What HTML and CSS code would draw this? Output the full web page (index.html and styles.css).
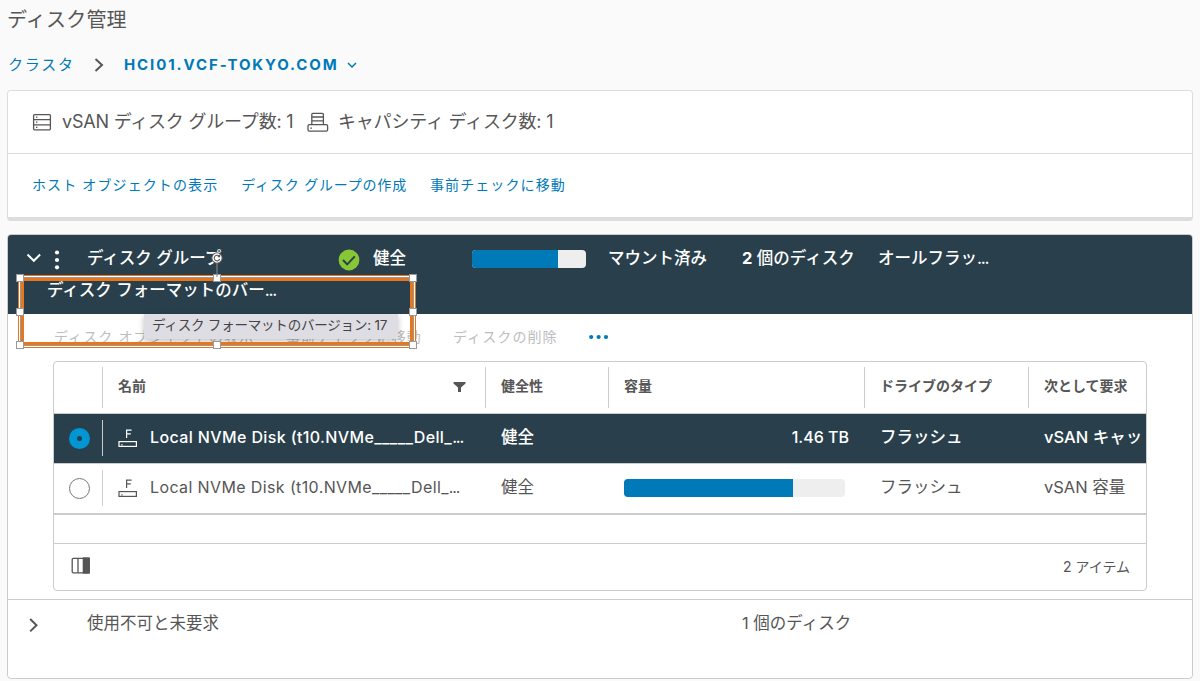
FILE: index.html
```html
<!DOCTYPE html>
<html lang="ja">
<head>
    <meta charset="UTF-8">
    <meta name="viewport" content="width=device-width, initial-scale=1.0">
    <title>ディスク管理</title>
    <link rel="stylesheet" href="styles.css">
</head>
<body>
    <h1 class="page-title">ディスク管理</h1>
    <nav class="breadcrumb">
        <a class="crumb">クラスタ</a>
        <svg class="crumb-sep" width="10" height="16" viewBox="0 0 10 16"><path d="M1.5 2l6.5 6-6.5 6"/></svg>
        <a class="crumb-current">HCI01.VCF-TOKYO.COM</a>
        <svg class="crumb-caret" width="10" height="8" viewBox="0 0 10 8"><path d="M1 2l4 4 4-4"/></svg>
    </nav>

    <section class="card summary">
        <div class="summary-stats">
            <svg class="icon" width="20" height="20" viewBox="0 0 20 20">
                <rect x="1.6" y="2.6" width="16.8" height="15.2" rx="1"/>
                <path d="M1.6 7.7h16.8M1.6 12.8h16.8M4 5.2h1.4M4 10.2h1.4M4 15.3h1.4"/>
            </svg>
            <span class="stat stat-groups">vSAN ディスク グループ数: 1</span>
            <svg class="icon" width="22" height="22" viewBox="0 0 22 22">
                <rect x="1" y="13.6" width="19.6" height="6.6" rx="1.4"/>
                <path d="M4.8 13.4V3.4q0-1 1-1h9.6q1 0 1 1v10M4.8 6h11.6M4.8 9.8h11.6M3.4 17.2h1.6"/>
            </svg>
            <span class="stat stat-capacity">キャパシティ ディスク数: 1</span>
        </div>
        <div class="summary-links">
            <a>ホスト オブジェクトの表示</a>
            <a class="tight">ディスク グループの作成</a>
            <a>事前チェックに移動</a>
        </div>
    </section>

    <section class="card groups">
        <div class="group-header">
            <div class="group-row">
                <svg class="chevron" width="16" height="10" viewBox="0 0 16 10"><path d="M1.5 1.5l6.3 6.3 6.3-6.3"/></svg>
                <svg class="kebab" width="6" height="20" viewBox="0 0 6 20"><circle cx="3" cy="2.5" r="2.1"/><circle cx="3" cy="10" r="2.1"/><circle cx="3" cy="17.3" r="2.1"/></svg>
                <span>ディスク グループ</span>
                <svg class="ok" width="22" height="22" viewBox="0 0 22 22"><circle cx="11" cy="11" r="10.4"/><path d="M5 11l4.2 4.4 7.6-8"/></svg>
                <span>健全</span>
                <div class="bar bar-light"><div class="bar-fill" style="width: 75.4%"></div></div>
                <span>マウント済み</span>
                <span><b class="num">2</b> 個のディスク</span>
                <span>オールフラッ<span class="dots">...</span></span>
            </div>
            <div class="group-format">ディスク フォーマットのバー<span class="dots">...</span></div>
        </div>

        <div class="group-body">
            <div class="actions">
                <a class="action-objects">ディスク オブジェクトの表示</a>
                <a class="action-precheck">事前チェックに移動</a>
                <a>ディスクの削除</a>
                <svg class="more" width="22" height="6" viewBox="0 0 22 6"><circle cx="3.2" cy="3" r="2.1"/><circle cx="10.6" cy="3" r="2.1"/><circle cx="18" cy="3" r="2.1"/></svg>
            </div>

            <div class="datagrid">
                <div class="grid-row grid-head">
                    <div class="cell"></div>
                    <div class="cell cell-name">名前
                        <svg class="filter" width="13" height="12" viewBox="0 0 13 12"><path d="M.5 1h12v1.6L8 6.6V11H5V6.6L.5 2.6z"/></svg>
                    </div>
                    <div class="cell">健全性</div>
                    <div class="cell">容量</div>
                    <div class="cell">ドライブのタイプ</div>
                    <div class="cell">次として要求</div>
                </div>
                <div class="grid-row selected">
                    <div class="cell cell-radio"><span class="radio checked"></span></div>
                    <div class="cell cell-name">
                        <svg class="disk" width="20" height="20" viewBox="0 0 20 20"><rect x="1" y="13.6" width="17.4" height="4.8"/><path d="M3.2 16.8h1.4M8.6 10V2.2h5M8.6 5.8h4.2"/></svg>
                        <span class="disk-name">Local NVMe Disk (t10.NVMe_____Dell_<span class="dots">...</span></span>
                    </div>
                    <div class="cell">健全</div>
                    <div class="cell cell-size">1.46 TB</div>
                    <div class="cell">フラッシュ</div>
                    <div class="cell">vSAN キャッ</div>
                </div>
                <div class="grid-row">
                    <div class="cell cell-radio"><span class="radio"></span></div>
                    <div class="cell cell-name">
                        <svg class="disk" width="20" height="20" viewBox="0 0 20 20"><rect x="1" y="13.6" width="17.4" height="4.8"/><path d="M3.2 16.8h1.4M8.6 10V2.2h5M8.6 5.8h4.2"/></svg>
                        <span class="disk-name">Local NVMe Disk (t10.NVMe_____Dell_<span class="dots">...</span></span>
                    </div>
                    <div class="cell">健全</div>
                    <div class="cell"><div class="bar"><div class="bar-fill" style="width: 76.3%"></div></div></div>
                    <div class="cell">フラッシュ</div>
                    <div class="cell">vSAN 容量</div>
                </div>
                <div class="grid-spacer"></div>
                <div class="grid-footer">
                    <svg class="columns" width="20" height="17" viewBox="0 0 20 17"><rect class="solid" x="12.4" y="1" width="5.8" height="15"/><rect x="1.2" y="1.4" width="17" height="14.4" rx="1"/><path d="M7 1v15M12.6 1v15"/></svg>
                    <span>2 アイテム</span>
                </div>
            </div>
        </div>

        <div class="group-row group-unused">
            <svg class="chevron" width="16" height="16" viewBox="0 0 16 16"><path d="M4.2 2l6.3 6.2-6.3 6.2"/></svg>
            <span></span>
            <span class="unused-name">使用不可と未要求</span>
            <span class="unused-count">1 個のディスク</span>
        </div>

        <div class="tooltip">ディスク フォーマットのバージョン: 17</div>
        <div class="selection">
            <i class="handle tl"></i><i class="handle tc"></i><i class="handle tr"></i>
            <i class="handle ml"></i><i class="handle mr"></i>
            <i class="handle bl"></i><i class="handle bc"></i><i class="handle br"></i>
            <svg class="rotate" width="14" height="26" viewBox="0 0 14 26"><path class="stem" d="M7 11v15"/><circle cx="7" cy="7" r="5.2"/><path d="M9.2 5.2A2.8 2.8 0 1 0 9.7 8M9.6 3.8v2H7.6"/></svg>
        </div>
    </section>
</body>
</html>
```

FILE: styles.css
```css
* {
    box-sizing: border-box;
}

body {
    margin: 0;
    padding: 0 7px;
    height: 681px;
    overflow: hidden;
    background: #fafafa;
    color: #565656;
    font-family: Inter, "Noto Sans CJK JP", sans-serif;
    font-size: 16.5px;
    line-height: 24px;
    white-space: nowrap;
}

svg {
    display: block;
    flex: none;
    fill: none;
    stroke: currentColor;
    stroke-width: 1.3;
}

.page-title {
    margin: 0;
    height: 40px;
    font-size: 20px;
    font-weight: 400;
    line-height: 41px;
    letter-spacing: 0.2px;
}

.breadcrumb {
    display: flex;
    align-items: center;
    height: 50px;
    padding-left: 1px;
    color: #0079b8;
    font-size: 15px;
}

.crumb {
    width: 86px;
    letter-spacing: 1.8px;
}

.crumb-sep {
    margin-right: 20px;
    color: #565656;
    stroke-width: 2;
}

.crumb-current {
    width: 223px;
    font-weight: 700;
    letter-spacing: 1.9px;
}

.crumb-caret {
    stroke-width: 1.5;
}

.card {
    position: relative;
    background: #fff;
    border: 1px solid #ddd;
    border-radius: 4px;
}

.summary {
    height: 131px;
    margin-bottom: 13px;
    border-bottom: 4px solid #ddd;
}

.summary-stats {
    display: flex;
    align-items: center;
    height: 63px;
    padding-left: 24px;
    border-bottom: 1px solid #ddd;
    font-size: 18px;
    letter-spacing: -0.2px;
}

.stat-groups {
    width: 255px;
    padding-left: 10px;
}

.stat-capacity {
    padding-left: 9px;
}

.summary-links {
    display: flex;
    gap: 23px;
    align-items: center;
    height: 62px;
    padding-left: 24px;
    color: #0079b8;
    font-size: 14px;
    letter-spacing: 1.1px;
}

.summary-links .tight {
    letter-spacing: 0.8px;
}

.groups {
    height: 445px;
    border-color: #ccc;
}

.group-header {
    height: 79px;
    background: #29404c;
    border-radius: 3px 3px 0 0;
    color: #fff;
    font-weight: 500;
}

.group-row {
    display: grid;
    grid-template-columns: 22px 39px 251px 35px 99px 136px 134px 136px auto;
    align-items: center;
    height: 46px;
    padding-left: 18px;
}

.group-row .chevron {
    stroke-width: 2;
}

.kebab,
.more {
    fill: currentColor;
    stroke: none;
}

.kebab {
    margin: 3px 0 0 6px;
}

.ok {
    margin-top: 3px;
    stroke: #29404c;
    stroke-width: 2;
}

.ok circle {
    fill: #87c736;
    stroke: none;
}

.num {
    font-weight: 700;
}

.dots {
    letter-spacing: -1.2px;
}

.group-format {
    padding-left: 39px;
    line-height: 19px;
}

.bar {
    width: 221px;
    height: 18px;
    overflow: hidden;
    background: #eee;
    border-radius: 4px;
}

.bar-light {
    width: 114px;
    margin-top: 2px;
}

.bar-fill {
    height: 100%;
    background: #0079b8;
}

.group-body {
    height: 286px;
    padding-left: 45px;
    border-bottom: 1px solid #ccc;
}

.actions {
    display: flex;
    align-items: center;
    height: 47px;
    padding: 0 0 1px 1px;
    color: #bdbdbd;
    font-size: 14px;
    letter-spacing: 1.1px;
}

.action-objects {
    width: 232px;
}

.action-precheck {
    width: 167px;
}

.more {
    margin-left: 30px;
    color: #0079b8;
}

.datagrid {
    width: 1094px;
    height: 230px;
    border: 1px solid #ccc;
    border-radius: 4px;
}

.grid-row {
    display: grid;
    grid-template-columns: 48px 383px 123px 256px 164px 118px;
    align-items: center;
    height: 50px;
    padding-bottom: 1px;
    overflow: hidden;
    border-bottom: 1px solid #ccc;
}

.grid-head {
    height: 52px;
    font-size: 14px;
    font-weight: 700;
}

.cell {
    display: flex;
    align-items: center;
    height: 36px;
    padding: 0 0 2px 16px;
}

.grid-head .cell {
    height: 41px;
    padding-left: 15px;
    border-left: 1px solid #ccc;
}

.grid-head .cell:first-child {
    border-left: none;
}

.cell-radio {
    padding: 0 0 0 15px;
}

.cell-name {
    padding-left: 15px;
    border-left: 1px solid #ccc;
}

.cell-name .filter {
    margin: 2px 19px 0 auto;
    fill: currentColor;
    stroke: none;
}

.disk-name {
    padding-left: 12px;
    font-size: 16px;
    letter-spacing: 0.38px;
}

.cell-size {
    justify-content: flex-end;
    padding-right: 15px;
    font-size: 16px;
}

.selected {
    background: #29404c;
    color: #fff;
    font-weight: 500;
}

.cell .bar {
    margin-top: 2px;
}

.radio {
    width: 21px;
    height: 21px;
    border: 1.5px solid #777;
    border-radius: 50%;
}

.radio.checked {
    border: 8px solid #0095d3;
    background: #29404c;
}

.disk {
    margin-top: 2px;
    stroke-width: 1.2;
}

.grid-spacer {
    height: 30px;
    border-top: 1px solid #ccc;
    border-bottom: 1px solid #ccc;
}

.grid-footer {
    display: flex;
    align-items: center;
    justify-content: space-between;
    height: 46px;
    padding: 0 16px 1px 17px;
    font-size: 14px;
}

.columns {
    margin-bottom: 2px;
}

.columns .solid {
    fill: currentColor;
}

.group-unused .chevron {
    margin-top: 3px;
}

.unused-count {
    grid-column: 8;
}

/* Overlays on top of the group header */
.tooltip {
    position: absolute;
    left: 136px;
    top: 79px;
    width: 254px;
    height: 25px;
    padding-left: 8px;
    background: #dedde3;
    box-shadow: 0 2px 6px rgba(0, 0, 0, 0.25);
    color: #444;
    font-size: 13.5px;
    line-height: 23px;
    letter-spacing: -0.2px;
}

.selection {
    position: absolute;
    left: 10px;
    top: 40px;
    width: 398px;
    height: 73px;
    border: 1px solid #e8761c;
    box-shadow: inset 0 0 0 1px #fff, inset 0 0 0 2px #999, inset 0 0 0 5px #e8761c;
}

.handle {
    position: absolute;
    width: 8px;
    height: 8px;
    background: #fff;
    border: 1px solid #999;
}

.tl, .tc, .tr { top: -2px; }
.ml, .mr { top: 32px; }
.bl, .bc, .br { bottom: -2px; }
.tl, .ml, .bl { left: -3px; }
.tc, .bc { left: 194px; }
.tr, .mr, .br { right: -2px; }

.rotate {
    position: absolute;
    left: 191px;
    top: -25px;
    stroke: #555;
    stroke-width: 1.1;
}

.rotate circle {
    fill: #fff;
}

.rotate .stem {
    stroke: #888;
}
```
